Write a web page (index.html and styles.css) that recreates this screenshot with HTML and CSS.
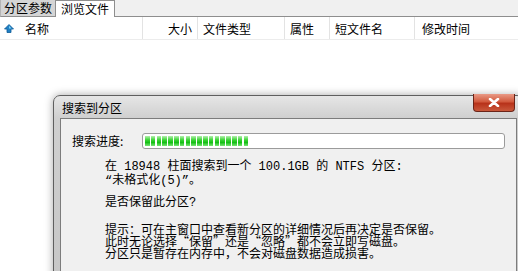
FILE: index.html
```html
<!DOCTYPE html>
<html lang="zh-CN">
<head>
  <meta charset="UTF-8">
  <title>浏览文件</title>
  <link rel="stylesheet" href="styles.css">
</head>
<body>

<div class="tabs">
  <div class="tab">分区参数</div>
  <div class="tab active">浏览文件</div>
  <div class="tab-rest"></div>
</div>

<div class="list-head">
  <div class="col c-name">
    <svg class="up" width="10" height="9" viewBox="0 0 10 9">
      <polygon points="5,0.5 9.5,5 7,5 7,8.5 3,8.5 3,5 0.5,5" fill="#1f7fc4" stroke="#0d5a97" stroke-width="0.8"/>
      <polygon points="5,1.8 7.6,4.4 5,4.4" fill="#7fd3f5"/>
    </svg>
    <span>名称</span>
  </div>
  <div class="col c-size">大小</div>
  <div class="col c-type">文件类型</div>
  <div class="col c-attr">属性</div>
  <div class="col c-short">短文件名</div>
  <div class="col c-time">修改时间</div>
</div>

<div class="dlg">
  <div class="dlg-title">搜索到分区</div>
  <div class="dlg-close">
    <svg width="12" height="9" viewBox="0 0 12 9">
      <path d="M2 1 L10 8 M10 1 L2 8" stroke="#fff" stroke-width="2.6" stroke-linecap="round"/>
    </svg>
  </div>
  <div class="dlg-body">
    <div class="progress-row">
      <span class="label">搜索进度:</span>
      <div class="bar"><div class="fill" style="width: 29%;"></div></div>
    </div>
    <div class="msg">
      <p class="found">在 18948 柱面搜索到一个 100.1GB 的 NTFS 分区:<br>“未格式化(5)”。</p>
      <p class="ask">是否保留此分区?</p>
      <p class="tip">
        <span class="line">提示：可在主窗口中查看新分区的详细情况后再决定是否保留。</span>
        <span class="line">此时无论选择“保留”还是“忽略”都不会立即写磁盘。</span>
        <span class="line">分区只是暂存在内存中，不会对磁盘数据造成损害。</span>
      </p>
    </div>
  </div>
</div>

</body>
</html>
```

FILE: styles.css
```css
* { box-sizing: border-box; }

body {
  margin: 0;
  width: 518px;
  height: 271px;
  overflow: hidden;
  position: relative;
  background: #fff;
  color: #000;
  font-family: "Noto Sans CJK SC", sans-serif;
  font-size: 12px;
}

.tabs {
  display: flex;
  height: 17px;
}

.tab {
  width: 55px;
  height: 17px;
  line-height: 16px;
  padding-left: 3px;
  background: #d5d5d5;
  border-bottom: 1px solid #8e8e8e;
  border-left: 1px solid #b5b5b5;
}

.tab.active {
  width: 60px;
  padding-left: 5px;
  background: #fff;
  border: 1px solid #8e8e8e;
  border-bottom: none;
}

.tab-rest {
  flex: 1;
  background: #f0f0f0;
  border-bottom: 1px solid #8e8e8e;
}

.list-head {
  display: flex;
  height: 23px;
  line-height: 23px;
  border-bottom: 1px solid #ececec;
}

.col {
  border-right: 1px solid #e3e3e3;
  padding-left: 5px;
  white-space: nowrap;
}

.c-name {
  width: 143px;
  display: flex;
  align-items: center;
  padding-left: 4px;
}

.c-name .up { margin-right: 11px; }

.c-size {
  width: 55px;
  text-align: right;
  padding-right: 5px;
}

.c-type { width: 87px; }
.c-attr { width: 45px; }
.c-short { width: 85px; }
.c-time { flex: 1; padding-left: 7px; border-right: none; }

/* dialog window floating over the list */
.dlg {
  position: absolute;
  left: 53px;
  top: 95px;
  width: 471px;
  height: 200px;
  padding: 0 6px;
  border: 1px solid #5f5f5f;
  border-radius: 7px 7px 0 0;
  background: linear-gradient(#e6e6e6, #cfcfcf 22px, #c6c6c6);
  box-shadow: 0 0 8px rgba(0, 0, 0, 0.35);
}

.dlg-title {
  height: 22px;
  line-height: 23px;
  padding-left: 2px;
}

.dlg-close {
  position: absolute;
  top: -2px;
  right: 8px;
  width: 42px;
  height: 18px;
  border: 1px solid #6b2418;
  border-top: none;
  border-radius: 0 0 4px 4px;
  background: linear-gradient(#e99a86, #d25a3e 45%, #b8321a 55%, #c9583b);
  display: flex;
  align-items: center;
  justify-content: center;
}

.dlg-body {
  height: 180px;
  background: #f0f0f0;
  border: 1px solid #7c7c7c;
  padding-top: 14px;
}

.progress-row {
  display: flex;
  align-items: center;
  padding-left: 11px;
}

.label {
  width: 70px;
  line-height: 16px;
}

.bar {
  width: 363px;
  height: 16px;
  padding: 2px;
  background: #fff;
  border: 1px solid #9b9b9b;
  border-radius: 3px;
}

.fill {
  height: 10px;
  background:
    repeating-linear-gradient(90deg, transparent 0 4.5px, #fff 4.5px 5.8px),
    linear-gradient(#b4f0ae, #38d432 40%, #16bf16 65%, #79e574);
}

.msg {
  padding-left: 44px;
  font-family: "Liberation Mono", "Noto Sans CJK SC", monospace;
  white-space: nowrap;
}

.msg p { margin: 0; }

.found {
  margin-top: 11px !important;
  line-height: 14px;
}

.ask {
  margin-top: 8px !important;
  line-height: 14px;
}

.tip {
  margin-top: 13px !important;
  font-family: "Noto Sans CJK SC", sans-serif;
}

.tip .line {
  display: block;
  height: 12px;
  line-height: 12px;
}
```
